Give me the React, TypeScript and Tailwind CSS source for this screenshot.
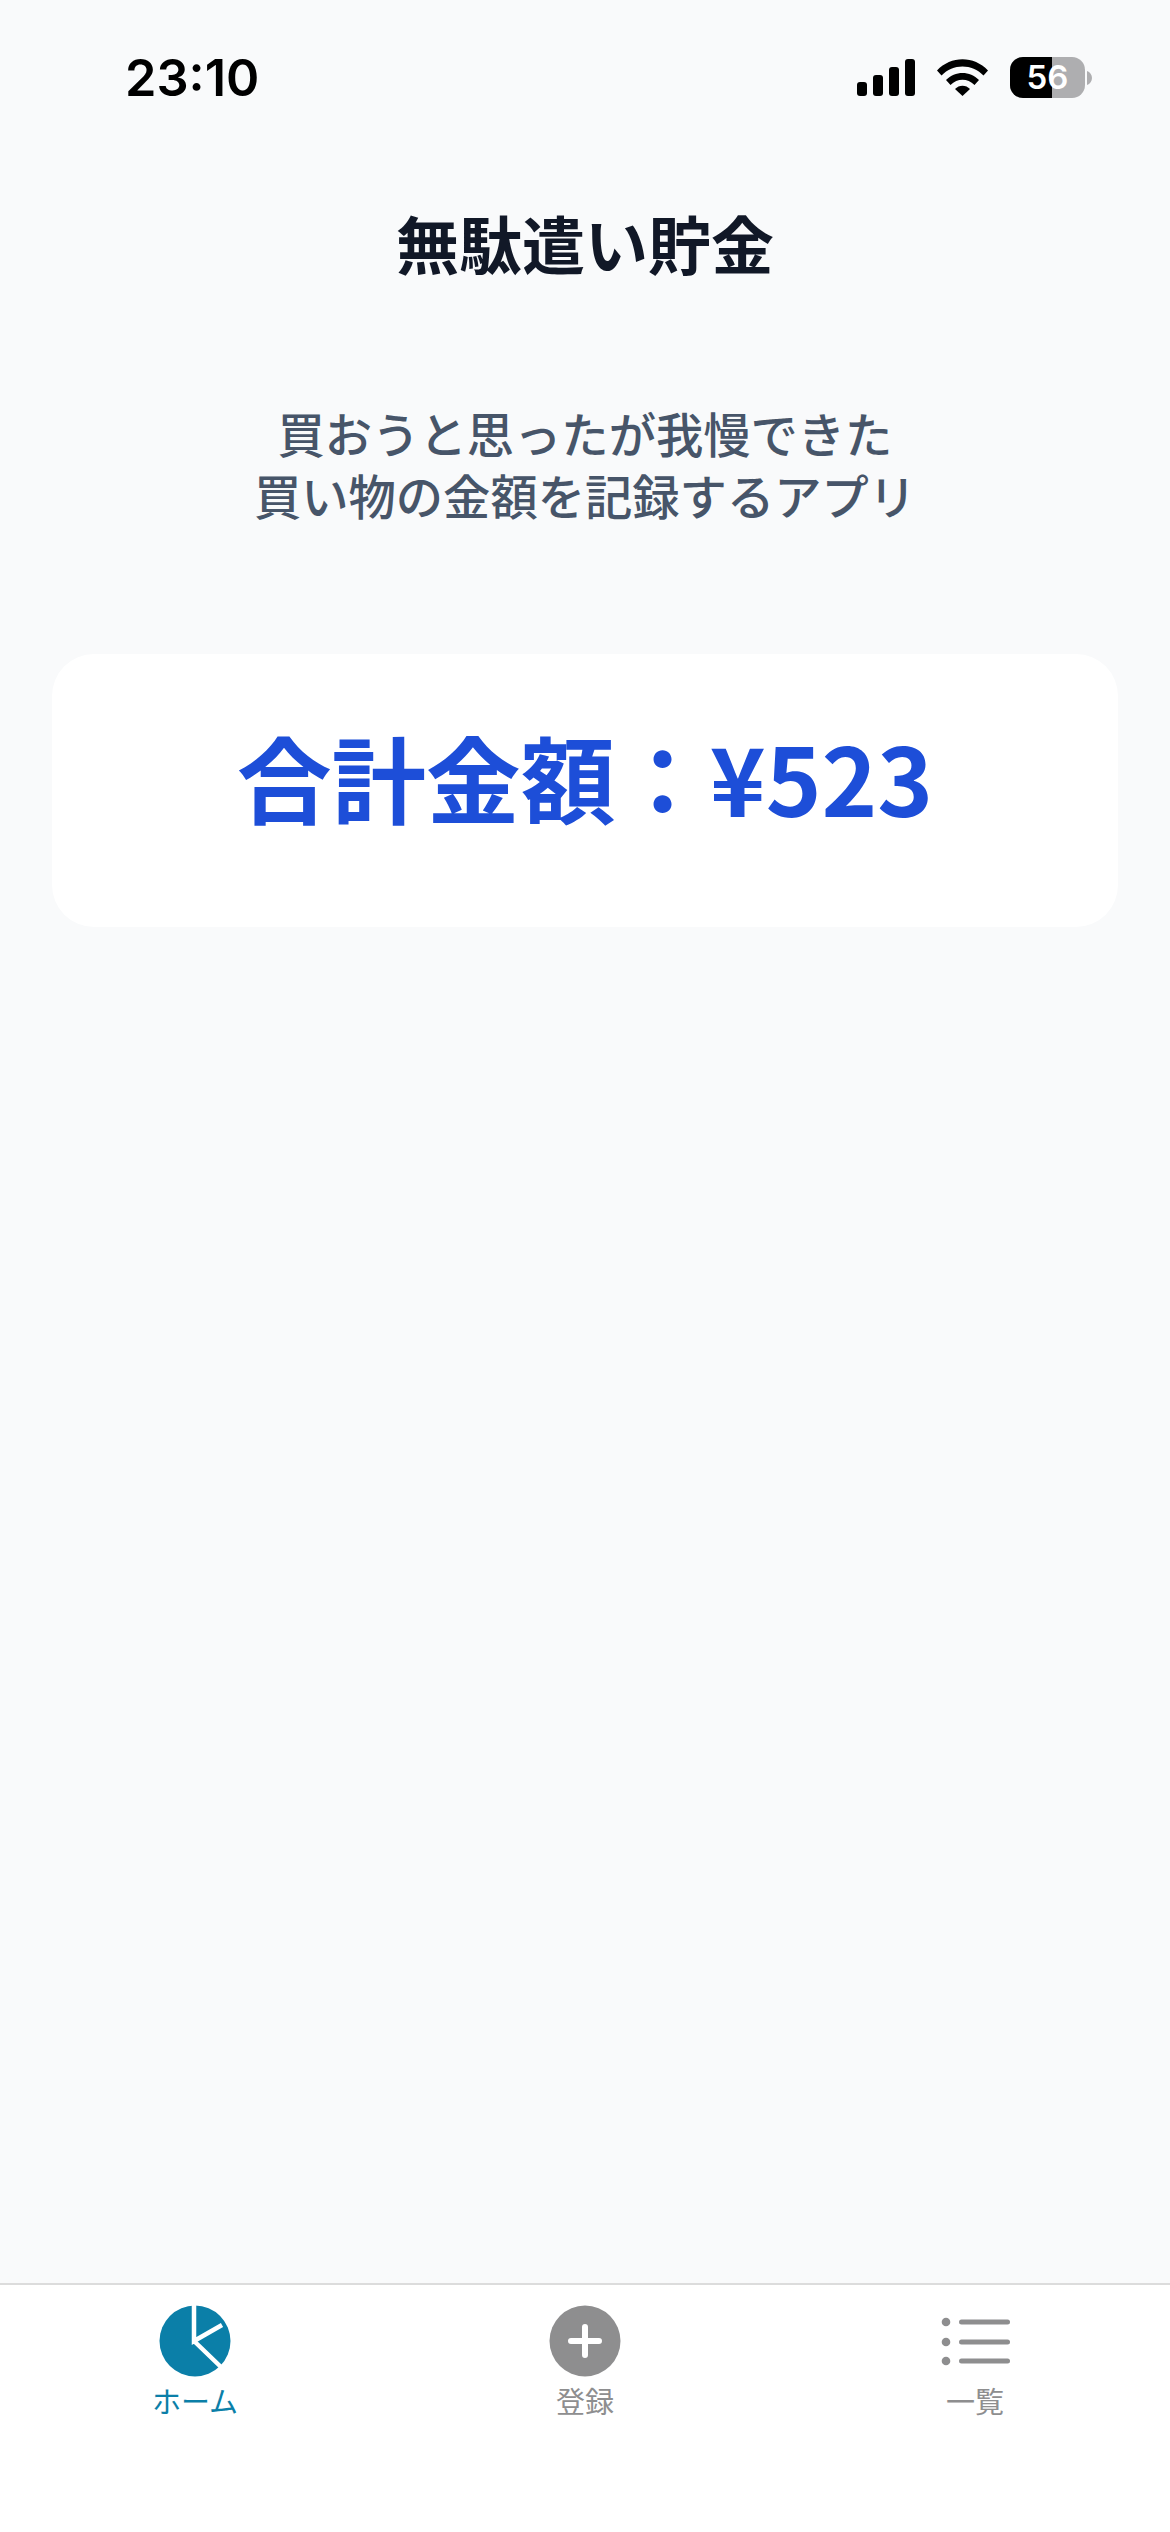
import React from 'react';

const jp = 'font-["Noto_Sans_CJK_JP",sans-serif]';

function StatusIcons() {
  return (
    <div className="flex items-center">
      <svg width="58" height="37" viewBox="0 0 58 37" fill="#000">
        <rect x="0" y="23" width="10" height="14" rx="3" />
        <rect x="16" y="16" width="10" height="21" rx="3" />
        <rect x="32" y="8" width="10" height="29" rx="3" />
        <rect x="48" y="0" width="10" height="37" rx="3" />
      </svg>
      <svg className="ml-[22px]" width="51" height="37" viewBox="0 0 51 37">
        <path d="M0 11.5C14-3.5 37-3.5 51 11.5L46.5 16.5C35 4.5 16 4.5 4.5 16.5Z" fill="#000" />
        <path d="M9 21C18 11.5 33 11.5 42 21L37.5 26C30.5 19 20.5 19 13.500 26Z" fill="#000" />
        <path d="M18 30C22 25.500 29 25.500 33 30L25.500 37Z" fill="#000" />
      </svg>
      <div className="ml-[22px] flex items-center">
        <div className="relative w-[75px] h-[41px] rounded-[13px] bg-[#aeaeb0] overflow-hidden flex items-center justify-center">
          <div className="absolute left-0 top-0 bottom-0 w-[42px] bg-black" />
          <span className="relative font-['Inter',sans-serif] font-semibold text-[33px] leading-none text-white">56</span>
        </div>
        <svg className="ml-[2px]" width="5" height="14" viewBox="0 0 5 14">
          <path d="M0 0C3 1 5 4 5 7S3 13 0 14Z" fill="#aeaeb0" />
        </svg>
      </div>
    </div>
  );
}

function PieIcon() {
  return (
    <svg width="72" height="72" viewBox="0 0 72 72">
      <circle cx="36" cy="36" r="35.500" fill="#0b7fa8" />
      <path d="M35 -1V36L63 20M35 36L62 62" fill="none" stroke="#fff" strokeWidth="4.500" />
    </svg>
  );
}

function PlusIcon() {
  return (
    <svg width="72" height="72" viewBox="0 0 72 72">
      <circle cx="36" cy="36" r="35.500" fill="#8e8e8f" />
      <path d="M36 22V50M22 36H50" fill="none" stroke="#fff" strokeWidth="6" strokeLinecap="round" />
    </svg>
  );
}

function ListIcon() {
  return (
    <svg width="72" height="72" viewBox="0 0 72 72" fill="#8e8e8f">
      <circle cx="7" cy="17" r="4.300" />
      <circle cx="7" cy="37" r="4.300" />
      <circle cx="7" cy="56" r="4.300" />
      <rect x="20" y="14.500" width="51" height="5" rx="2.500" />
      <rect x="20" y="34.500" width="51" height="5" rx="2.500" />
      <rect x="20" y="53.500" width="51" height="5" rx="2.500" />
    </svg>
  );
}

export default function App() {
  const tabs = [
    { label: 'ホーム', icon: <PieIcon />, color: 'text-[#0b7fa8]' },
    { label: '登録', icon: <PlusIcon />, color: 'text-[#8e8e8f]' },
    { label: '一覧', icon: <ListIcon />, color: 'text-[#8e8e8f]' },
  ];

  return (
    <div className={`h-[2532px] w-[1170px] flex flex-col bg-[#f9fafb] ${jp}`}>
      <div className="flex items-center justify-between pt-[57px] pl-[125px] pr-[78px] h-[98px]">
        <span className="font-['Inter',sans-serif] font-semibold text-[50.500px] leading-[41px] text-black">23:10</span>
        <StatusIcons />
      </div>

      <main className="flex-1 flex flex-col px-[52px]">
        <h1 className="mt-[100px] text-center text-[63px] leading-[88px] font-bold text-[#111827]">無駄遣い貯金</h1>
        <div className="mt-[116px] flex flex-col gap-[1px] text-center text-[47.300px] leading-[62px] font-medium text-[#475569]">
          <p className="h-[61px]">買おうと思ったが我慢できた</p>
          <p className="h-[62px]">買い物の金額を記録するアプリ</p>
        </div>
        <div className="mt-[128px] h-[273px] pb-[29px] bg-white rounded-[42px] flex items-center justify-center">
          <span className="text-[94.600px] leading-none font-bold text-[#1d4ed8]">合計金額：¥523</span>
        </div>
      </main>

      <nav className="h-[249px] bg-white border-t-2 border-[#dcdcdc] grid grid-cols-3 pt-[20px]">
        {tabs.map((tab) => (
          <div key={tab.label} className="flex flex-col items-center">
            {tab.icon}
            <span className={`mt-[3px] text-[29px] leading-[40px] ${tab.color}`}>{tab.label}</span>
          </div>
        ))}
      </nav>
    </div>
  );
}
